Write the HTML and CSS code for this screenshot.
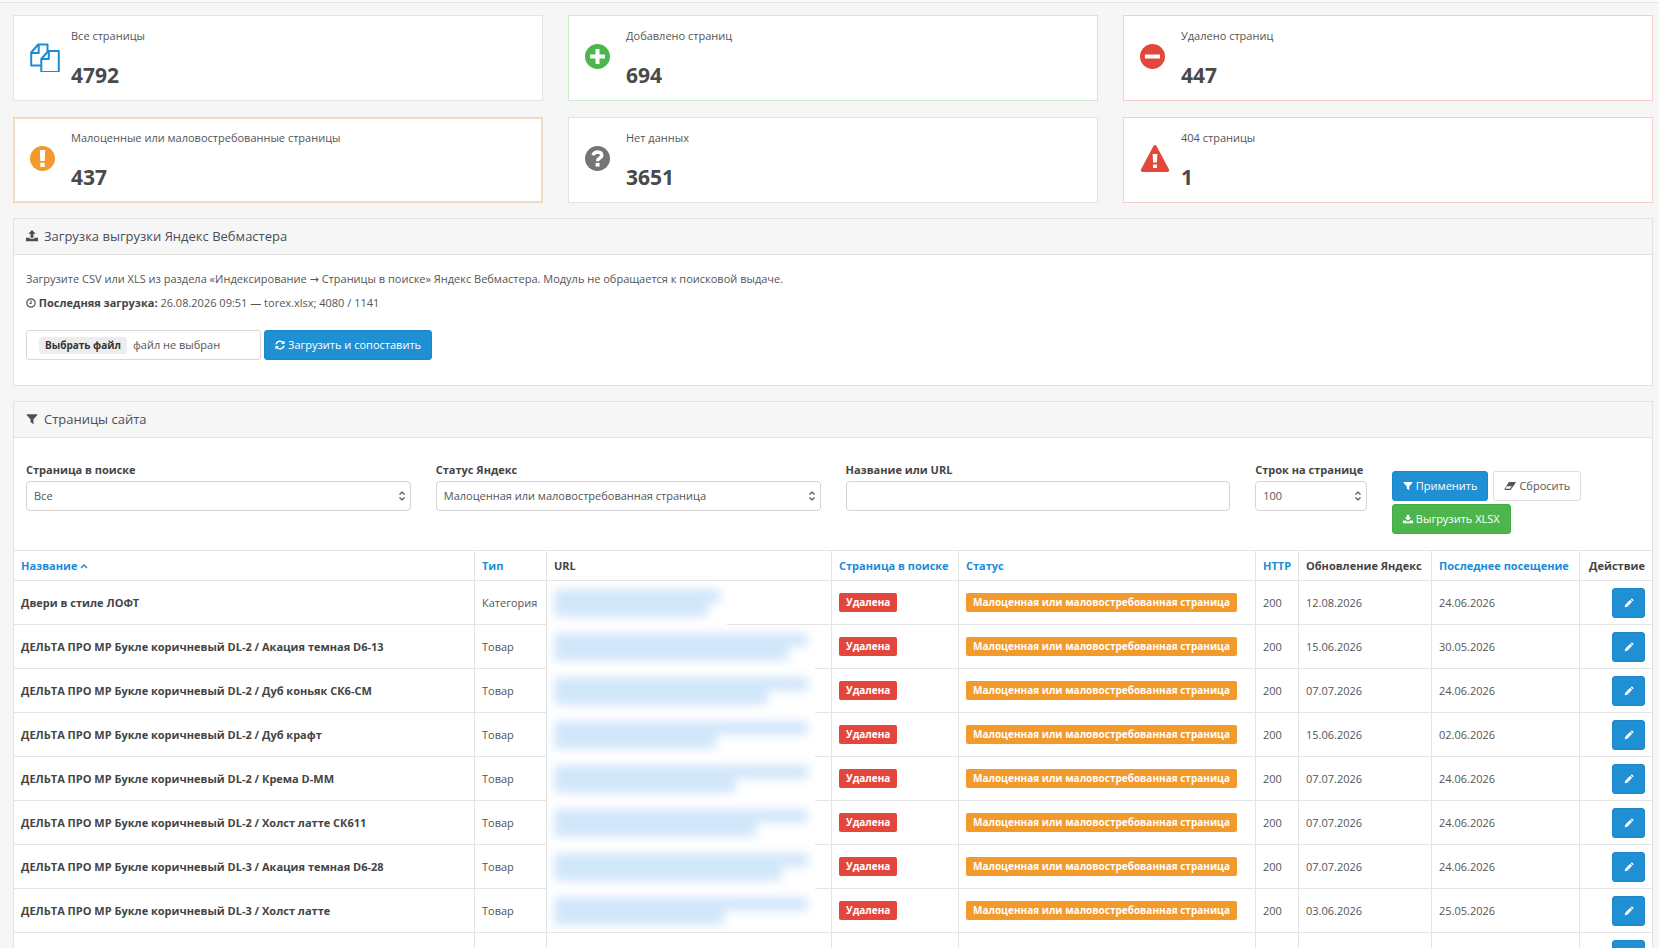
FILE: index.html
```html
<!DOCTYPE html>
<html lang="ru">
<head>
    <meta charset="UTF-8">
    <title>Страницы сайта</title>
    <link rel="stylesheet" href="styles.css">
</head>
<body>
<svg class="sprite" aria-hidden="true">
    <symbol id="i-upload" viewBox="0 0 14 14"><path d="M7 0l4.300 4.500H8.700V9H5.300V4.500H2.700zM0 9h4.200v1.200h5.600V9H14v4H0z"/></symbol>
    <symbol id="i-download" viewBox="0 0 14 14"><path d="M5.300 1h3.400v4h2.800L7 9.500 2.500 5h2.800zM0 9h3.800L7 11.400 10.200 9H14v4H0z"/></symbol>
    <symbol id="i-filter" viewBox="0 0 14 14"><path d="M1 1.500h12v1.200L8.700 7.300V13L5.300 10.500V7.300L1 2.700z"/></symbol>
    <symbol id="i-pencil" viewBox="0 0 14 14"><path d="M1 13l.8-3.600L8.600 2.600l2.800 2.800-6.800 6.800zM9.400 1.800l.9-.9q.7-.5 1.400.1l1.300 1.300q.6.700.1 1.400l-.9.900z"/></symbol>
    <symbol id="i-eraser" viewBox="0 0 16 14"><path fill-rule="evenodd" d="M7.300 1.500H15q1 .2.600 1.200L9.500 11.300q-.6.900-1.500.900H1.200q-1-.2-.5-1.200L6 2.400q.5-.8 1.300-.9zM4 7.300L2 10.700h6l2.400-3.400z"/></symbol>
</svg>

<div class="stats">
    <div class="stat">
        <svg class="stat__icon stat__icon--wide" viewBox="0 0 30 30" fill="none" stroke="#1b8cd8" stroke-width="2" stroke-linejoin="round"><path d="M10.500 23.500H1.200V10.500l7-8h9.300V9M1.200 11h7.500V2.500M11.300 17l7-8h10.500v21H11.300zM11.300 17h7.500V9"/></svg>
        <div>
            <div class="stat__name">Все страницы</div>
            <div class="stat__value">4792</div>
        </div>
    </div>
    <div class="stat stat--green">
        <svg class="stat__icon" viewBox="0 0 25 25"><circle cx="12.500" cy="12.500" r="12.500" fill="#4cb64c"/><path d="M12.500 5v15M5 12.500h15" stroke="#fff" stroke-width="4"/></svg>
        <div>
            <div class="stat__name">Добавлено страниц</div>
            <div class="stat__value">694</div>
        </div>
    </div>
    <div class="stat stat--red">
        <svg class="stat__icon" viewBox="0 0 25 25"><circle cx="12.500" cy="12.500" r="12.500" fill="#e3463a"/><path d="M5 12.500h15" stroke="#fff" stroke-width="4"/></svg>
        <div>
            <div class="stat__name">Удалено страниц</div>
            <div class="stat__value">447</div>
        </div>
    </div>
    <div class="stat stat--active">
        <svg class="stat__icon" viewBox="0 0 25 25"><circle cx="12.500" cy="12.500" r="12.500" fill="#f39a2c"/><path d="M9.800 4h5.400l-.5 11h-4.400zM10.300 16.800h4.400V21h-4.400z" fill="#fff"/></svg>
        <div>
            <div class="stat__name">Малоценные или маловостребованные страницы</div>
            <div class="stat__value">437</div>
        </div>
    </div>
    <div class="stat">
        <svg class="stat__icon" viewBox="0 0 25 25"><circle cx="12.500" cy="12.500" r="12.500" fill="#757575"/><path d="M8 9.300q1-3.300 4.600-3.300 4 .2 4.200 3.300 0 1.800-2.300 3-1.900 1-1.900 2.900" fill="none" stroke="#fff" stroke-width="3.400"/><path d="M10.600 16.900h4v3.700h-4z" fill="#fff"/></svg>
        <div>
            <div class="stat__name">Нет данных</div>
            <div class="stat__value">3651</div>
        </div>
    </div>
    <div class="stat stat--red">
        <svg class="stat__icon stat__icon--wide" viewBox="0 0 30 30"><path d="M13.300 2.200q1.700-2.400 3.400 0L29 25.500q.7 2.300-1.600 2.500H2.600Q.3 27.800 1 25.500z" fill="#e3463a"/><path d="M12.600 10h4.800l-.5 8.500h-3.800zM13 20.500h4V24h-4z" fill="#fff"/></svg>
        <div>
            <div class="stat__name">404 страницы</div>
            <div class="stat__value">1</div>
        </div>
    </div>
</div>

<div class="panel">
    <h3 class="panel__heading"><svg class="icon"><use href="#i-upload"/></svg>Загрузка выгрузки Яндекс Вебмастера</h3>
    <form class="upload">
        <p class="upload__hint">Загрузите CSV или XLS из раздела «Индексирование <span class="arrow">→</span> Страницы в поиске» Яндекс Вебмастера. Модуль не обращается к поисковой выдаче.</p>
        <p class="upload__last"><svg class="icon icon--clock" viewBox="0 0 10 10"><circle cx="5" cy="5" r="4.200"/><path d="M5 2.500V5.500H3.400"/></svg> <b>Последняя загрузка:</b> 26.08.2026 09:51 — torex.xlsx; 4080 / 1141</p>
        <div class="upload__controls">
            <label class="file">
                <input class="file__input" type="file">
                <span class="file__button">Выбрать файл</span>
                <span>файл не выбран</span>
            </label>
            <button class="btn btn--blue" type="button"><svg class="icon icon--refresh" viewBox="0 0 12 12"><path d="M1.300 5.200Q2 1.500 6 1.300q2.400.1 4 2.200M10.700 6.800Q10 10.500 6 10.700q-2.400-.1-4-2.200"/><path class="icon__tip" d="M11.500.5v4.300H7.200zM.5 11.500V7.200h4.300z"/></svg>Загрузить и сопоставить</button>
        </div>
    </form>
</div>

<div class="panel">
    <h3 class="panel__heading"><svg class="icon"><use href="#i-filter"/></svg>Страницы сайта</h3>
    <form class="filter">
        <div class="filter__field">
            <label for="in-search">Страница в поиске</label>
            <select class="control" id="in-search"><option>Все</option></select>
        </div>
        <div class="filter__field">
            <label for="status">Статус Яндекс</label>
            <select class="control" id="status"><option>Малоценная или маловостребованная страница</option></select>
        </div>
        <div class="filter__field">
            <label for="query">Название или URL</label>
            <input class="control" id="query" type="text">
        </div>
        <div class="filter__field filter__field--short">
            <label for="limit">Строк на странице</label>
            <select class="control" id="limit"><option>100</option></select>
        </div>
        <div class="filter__actions">
            <button class="btn btn--blue" type="button"><svg class="icon icon--small"><use href="#i-filter"/></svg>Применить</button>
            <button class="btn" type="button"><svg class="icon"><use href="#i-eraser"/></svg>Сбросить</button>
            <button class="btn btn--green" type="button"><svg class="icon icon--small"><use href="#i-download"/></svg>Выгрузить XLSX</button>
        </div>
    </form>
    <table class="pages">
        <colgroup>
            <col>
            <col class="col-type">
            <col class="col-url">
            <col class="col-search">
            <col class="col-status">
            <col class="col-http">
            <col class="col-updated">
            <col class="col-visited">
            <col class="col-action">
        </colgroup>
        <thead>
        <tr>
            <th><a href="#">Название <svg class="caret" viewBox="0 0 8 6"><path d="M1 5l3-3 3 3"/></svg></a></th>
            <th><a href="#">Тип</a></th>
            <th>URL</th>
            <th><a href="#">Страница в поиске</a></th>
            <th><a href="#">Статус</a></th>
            <th><a href="#">HTTP</a></th>
            <th>Обновление Яндекс</th>
            <th><a href="#">Последнее посещение</a></th>
            <th class="pages__action">Действие</th>
        </tr>
        </thead>
        <tbody id="rows"></tbody>
    </table>
</div>
<script>
    // name, type, widths of the two hidden url lines, updated, visited
    const pages = [
        ['Двери в стиле ЛОФТ', 'Категория', 166, 154, '12.08.2026', '24.06.2026'],
        ['ДЕЛЬТА ПРО МР Букле коричневый DL-2 / Акация темная D6-13', 'Товар', 254, 234, '15.06.2026', '30.05.2026'],
        ['ДЕЛЬТА ПРО МР Букле коричневый DL-2 / Дуб коньяк СК6-СМ', 'Товар', 254, 214, '07.07.2026', '24.06.2026'],
        ['ДЕЛЬТА ПРО МР Букле коричневый DL-2 / Дуб крафт', 'Товар', 254, 162, '15.06.2026', '02.06.2026'],
        ['ДЕЛЬТА ПРО МР Букле коричневый DL-2 / Крема D-ММ', 'Товар', 254, 182, '07.07.2026', '24.06.2026'],
        ['ДЕЛЬТА ПРО МР Букле коричневый DL-2 / Холст латте СК611', 'Товар', 254, 202, '07.07.2026', '24.06.2026'],
        ['ДЕЛЬТА ПРО МР Букле коричневый DL-3 / Акация темная D6-28', 'Товар', 254, 228, '07.07.2026', '24.06.2026'],
        ['ДЕЛЬТА ПРО МР Букле коричневый DL-3 / Холст латте', 'Товар', 254, 170, '03.06.2026', '25.05.2026']
    ];
    const edit = '<button class="btn btn--blue btn--icon" type="button" aria-label="Редактировать"><svg class="icon icon--small"><use href="#i-pencil"/></svg></button>';

    document.getElementById('rows').innerHTML = pages.map(([name, type, first, second, updated, visited]) => `
        <tr>
            <td class="pages__name">${name}</td>
            <td>${type}</td>
            <td><div class="hidden-url"><div class="hidden-url__lines"><span style="width: ${first}px"></span><span style="width: ${second}px"></span></div></div></td>
            <td><span class="tag tag--red">Удалена</span></td>
            <td><span class="tag tag--orange">Малоценная или маловостребованная страница</span></td>
            <td>200</td>
            <td>${updated}</td>
            <td>${visited}</td>
            <td class="pages__action">${edit}</td>
        </tr>`).join('') + `<tr>${'<td></td>'.repeat(8)}<td class="pages__action">${edit}</td></tr>`;
</script>
</body>
</html>
```

FILE: styles.css
```css
* {
    box-sizing: border-box;
}

html {
    overflow: hidden;
    background: #fafafa;
}

body {
    height: 100vh;
    margin: 2px 0 0;
    padding: 12px 6px 0 13px;
    border-top: 1px solid #e6e6e6;
    background: #f6f6f6;
    color: #555;
    font: 11px/18px "Open Sans", sans-serif;
}

button,
input,
select {
    color: inherit;
    font: inherit;
}

a {
    color: #1b8cd8;
    text-decoration: none;
}

b {
    color: #444;
}

.sprite {
    position: absolute;
    width: 0;
    height: 0;
}

.icon {
    flex: none;
    width: 12px;
    height: 12px;
    fill: currentColor;
}

.icon--small {
    width: 10px;
    height: 10px;
}

.icon--clock,
.icon--refresh {
    width: 10px;
    height: 10px;
    fill: none;
    stroke: currentColor;
}

.icon--clock {
    stroke-width: 1.200;
}

.icon--refresh {
    stroke-width: 1.700;
}

.icon__tip {
    fill: currentColor;
    stroke: none;
}

.stats {
    display: grid;
    grid-template-columns: repeat(3, 1fr);
    gap: 16px 25px;
    margin-bottom: 15px;
}

.stat {
    display: flex;
    align-items: center;
    height: 86px;
    padding: 0 16px;
    border: 1px solid #e4e4e4;
    background: #fff;
}

.stat > div {
    flex: 1;
}

.stat--green {
    border-color: #cfe9cf;
}

.stat--red {
    border-color: #f6cfcc;
}

.stat--active {
    padding: 0 15px;
    border: 2px solid #efdcc4;
}

.stat__icon {
    width: 25px;
    height: 25px;
    margin: 0 16px 3px 0;
}

.stat__icon--wide {
    width: 30px;
    height: 30px;
    margin-right: 11px;
}

.stat__name {
    margin-bottom: 16px;
}

.stat__value {
    color: #4a4a4a;
    font-size: 21px;
    font-weight: 700;
    line-height: 28px;
}

.panel {
    margin-bottom: 15px;
    border: 1px solid #e2e2e2;
    background: #fff;
}

.panel__heading {
    display: flex;
    align-items: center;
    gap: 6px;
    height: 36px;
    margin: 0;
    padding: 0 12px 2px;
    border-bottom: 1px solid #e2e2e2;
    background: #f6f6f6;
    color: #4c4d5a;
    font-size: 13px;
    font-weight: 400;
}

.upload {
    padding: 15px 12px 25px;
}

.upload p {
    margin: 0 0 6px;
}

.upload .upload__last {
    margin-bottom: 18px;
}

.upload__last .icon {
    vertical-align: -1px;
}

.upload__controls {
    display: flex;
    gap: 3px;
}

.arrow {
    font-family: "DejaVu Sans", sans-serif;
    line-height: 1;
}

.file {
    display: flex;
    align-items: center;
    gap: 6px;
    width: 235px;
    height: 30px;
    padding: 0 12px;
    border: 1px solid #d8d8d8;
    border-radius: 3px;
}

.file__input {
    position: absolute;
    width: 1px;
    height: 1px;
    opacity: 0;
}

.file__button {
    padding: 0 6px;
    border-radius: 4px;
    background: #ededed;
    color: #333;
    font-size: 10px;
    font-weight: 700;
    line-height: 17px;
}

.btn {
    display: inline-flex;
    align-items: center;
    justify-content: center;
    gap: 3px;
    height: 30px;
    padding: 0 10px;
    border: 1px solid #ddd;
    border-radius: 3px;
    background: #fff;
}

.btn--blue {
    border-color: #1e87c9;
    background: #1f90d4;
    color: #fff;
}

.btn--green {
    border-color: #45ab45;
    background: #4cb64c;
    color: #fff;
}

.btn--icon {
    width: 33px;
    padding: 0;
}

.filter {
    display: grid;
    grid-template-columns: repeat(12, 1fr);
    gap: 25px;
    padding: 23px 12px 16px;
}

.filter__field {
    grid-column: span 3;
    min-width: 0;
}

.filter__field--short {
    grid-column: span 1;
}

.filter__field label {
    display: block;
    margin-bottom: 2px;
    color: #444;
    font-weight: 700;
    white-space: nowrap;
}

.filter__actions {
    display: flex;
    flex-wrap: wrap;
    grid-column: span 2;
    align-content: flex-start;
    gap: 3px 5px;
    padding-top: 10px;
}

.control {
    width: 100%;
    height: 30px;
    padding: 0 7px;
    border: 1px solid #d4d4d4;
    border-radius: 4px;
    background: #fff;
}

select.control {
    appearance: none;
    background: #fff url("data:image/svg+xml,%3Csvg xmlns='http://www.w3.org/2000/svg' width='8' height='12' fill='none' stroke='%23555' stroke-width='1.200'%3E%3Cpath d='M1.500 4.500l2.500-2.500 2.500 2.500M1.500 7.500l2.500 2.500 2.500-2.500'/%3E%3C/svg%3E") no-repeat right 4px center;
}

.pages {
    width: 100%;
    border-spacing: 0;
    table-layout: fixed;
}

.pages th,
.pages td {
    height: 44px;
    padding: 0 7px;
    border-right: 1px solid #e4e4e4;
    border-bottom: 1px solid #e4e4e4;
    text-align: left;
    white-space: nowrap;
}

.pages th {
    height: 31px;
    border-top: 1px solid #e4e4e4;
    color: #444;
}

.pages th:last-child,
.pages td:last-child {
    border-right: 0;
}

.pages .pages__name {
    color: #444;
    font-weight: 700;
}

.pages .pages__action {
    text-align: right;
}

.pages .btn {
    vertical-align: middle;
}

.col-type {
    width: 72px;
}

.col-url {
    width: 285px;
}

.col-search {
    width: 127px;
}

.col-status {
    width: 297px;
}

.col-http {
    width: 43px;
}

.col-updated {
    width: 133px;
}

.col-visited {
    width: 148px;
}

.col-action {
    width: 72px;
}

.caret {
    width: 8px;
    height: 6px;
    fill: none;
    stroke: currentColor;
    stroke-width: 1.500;
    vertical-align: 1px;
}

.tag {
    display: inline-block;
    padding: 0 7px;
    border-radius: 2px;
    color: #fff;
    font-size: 10px;
    font-weight: 700;
    line-height: 19px;
    vertical-align: middle;
}

.tag--red {
    background: #e3463a;
}

.tag--orange {
    background: #f39a2c;
}

.hidden-url {
    width: fit-content;
    height: 44px;
    margin: 0 0 -1px -7px;
    padding: 8px 7px;
    background: #fff;
}

.hidden-url__lines {
    filter: blur(5px);
}

.hidden-url span {
    display: block;
    height: 14px;
    background: #d3e7fb;
}

.pages tr:nth-last-child(2) .hidden-url {
    height: 43px;
    margin-bottom: 0;
}
```
